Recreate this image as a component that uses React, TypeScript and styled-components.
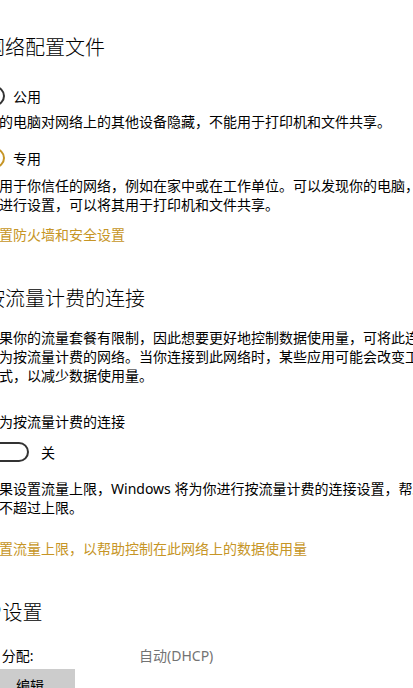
import styled, { createGlobalStyle } from "styled-components";

const GlobalStyle = createGlobalStyle`
  html, body {
    margin: 0;
    padding: 0;
    background: #ffffff;
    overflow: hidden;
  }

  body {
    font-family: "Noto Sans", "Noto Sans CJK SC", sans-serif;
    color: #000000;
  }
`;

const accent = "#c69526";

const App = () => {
  return (
    <>
      <GlobalStyle />
      <Page>
        <Heading>网络配置文件</Heading>

        <RadioRow $top={25}>
          <Radio />
          <RadioLabel>公用</RadioLabel>
        </RadioRow>
        <Description $top={6}>你的电脑对网络上的其他设备隐藏，不能用于打印机和文件共享。</Description>

        <RadioRow $top={17}>
          <Radio $checked />
          <RadioLabel>专用</RadioLabel>
        </RadioRow>
        <Description $top={8}>
          适用于你信任的网络，例如在家中或在工作单位。可以发现你的电脑，如果你对
          <br />
          其进行设置，可以将其用于打印机和文件共享。
        </Description>

        <Link $top={11}>配置防火墙和安全设置</Link>

        <Heading $top={40}>按流量计费的连接</Heading>
        <Description $top={16}>
          如果你的流量套餐有限制，因此想要更好地控制数据使用量，可将此连接
          <br />
          设为按流量计费的网络。当你连接到此网络时，某些应用可能会改变工作方
          <br />
          方式，以减少数据使用量。
        </Description>

        <Description $top={27}>设为按流量计费的连接</Description>
        <ToggleRow>
          <Toggle>
            <Knob />
          </Toggle>
          <ToggleLabel>关</ToggleLabel>
        </ToggleRow>

        <Description $top={17}>
          如果设置流量上限，Windows 将为你进行按流量计费的连接设置，帮助你确保
          <br />
          保不超过上限。
        </Description>

        <Link $top={22}>设置流量上限，以帮助控制在此网络上的数据使用量</Link>

        <Heading $top={40}>
          <Narrow>IP </Narrow>设置
        </Heading>
        <InfoGrid>
          <InfoKey>IP 分配:</InfoKey>
          <InfoValue>自动(DHCP)</InfoValue>
        </InfoGrid>
        <Button>编辑</Button>
      </Page>
    </>
  );
};

const Page = styled.div`
  display: flex;
  flex-direction: column;
  align-items: flex-start;
  width: 600px;
  margin-left: -15px;
  padding-top: 33px;
`;

const Heading = styled.h2<{ $top?: number }>`
  margin: ${(p) => p.$top ?? 0}px 0 0;
  font-family: "Noto Sans CJK SC", sans-serif;
  font-size: 20px;
  font-weight: 300;
  line-height: 28px;
  white-space: nowrap;
`;

const Narrow = styled.span`
  letter-spacing: -1.5px;
`;

const RadioRow = styled.div<{ $top: number }>`
  display: flex;
  align-items: center;
  gap: 8px;
  height: 20px;
  margin-top: ${(p) => p.$top}px;
`;

const Radio = styled.span<{ $checked?: boolean }>`
  box-sizing: border-box;
  position: relative;
  width: 20px;
  height: 20px;
  border-radius: 50%;
  border: 2px solid ${(p) => (p.$checked ? accent : "#333333")};

  &::after {
    content: "";
    display: ${(p) => (p.$checked ? "block" : "none")};
    position: absolute;
    left: 3px;
    top: 3px;
    width: 10px;
    height: 10px;
    border-radius: 50%;
    background: #000000;
  }
`;

const RadioLabel = styled.span`
  font-family: "Noto Sans CJK SC", sans-serif;
  font-size: 14px;
  line-height: 20px;
`;

const Description = styled.p<{ $top: number }>`
  margin: ${(p) => p.$top}px 0 0;
  font-family: "Noto Sans", "Noto Sans CJK SC", sans-serif;
  font-size: 14px;
  line-height: 19px;
  white-space: nowrap;
`;

const Link = styled.a<{ $top: number }>`
  margin-top: ${(p) => p.$top}px;
  font-family: "Noto Sans CJK SC", sans-serif;
  font-size: 14px;
  line-height: 19px;
  color: ${accent};
  white-space: nowrap;
  cursor: pointer;
`;

const ToggleRow = styled.div`
  display: flex;
  align-items: center;
  gap: 12px;
  margin-top: 11px;
  height: 20px;
`;

const Toggle = styled.span`
  box-sizing: border-box;
  display: flex;
  align-items: center;
  width: 44px;
  height: 20px;
  padding: 0 3px;
  border: 2px solid #333333;
  border-radius: 10px;
`;

const Knob = styled.span`
  width: 10px;
  height: 10px;
  border-radius: 50%;
  background: #333333;
`;

const ToggleLabel = styled.span`
  font-family: "Noto Sans CJK SC", sans-serif;
  font-size: 14px;
  line-height: 20px;
`;

const InfoGrid = styled.div`
  display: grid;
  grid-template-columns: 154px auto;
  margin-top: 20px;
  font-family: "Noto Sans", "Noto Sans CJK SC", sans-serif;
  font-size: 14px;
  line-height: 19px;
`;

const InfoKey = styled.span`
  color: #000000;
`;

const InfoValue = styled.span`
  color: #737373;
`;

const Button = styled.button`
  margin-top: 4px;
  width: 90px;
  height: 32px;
  border: none;
  background: #cccccc;
  font-family: "Noto Sans CJK SC", sans-serif;
  font-size: 14px;
  color: #000000;
  padding: 0;
`;

export default App;
